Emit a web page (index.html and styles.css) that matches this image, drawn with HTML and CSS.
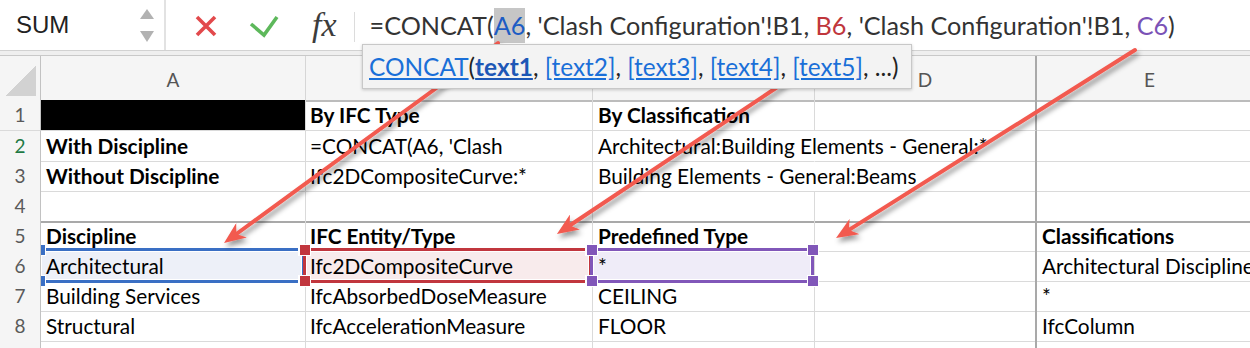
FILE: index.html
```html
<!DOCTYPE html>
<html>
  <head>
    <meta charset="UTF-8" />
    <title>Clash Configuration</title>
    <link rel="stylesheet" href="styles.css">
  </head>
  <body>
    <!-- Formula bar -->
    <div class="formula-bar">
      <div class="name-box">
        <span class="name">SUM</span>
        <svg class="spinner" width="14" height="34" viewBox="0 0 14 34">
          <polygon points="0,10 7,0 14,10" />
          <polygon points="0,22 7,33 14,22" />
        </svg>
      </div>
      <svg class="btn-cancel" width="24" height="24" viewBox="0 0 24 24">
        <path d="M3 2 L21 20 M21 2 L3 20" />
      </svg>
      <svg class="btn-enter" width="30" height="24" viewBox="0 0 30 24">
        <path d="M2 9 L15 20 L28 2" />
      </svg>
      <span class="fx">fx</span>
      <span class="divider"></span>
      <div class="formula">=CONCAT(<span class="ref ref-a">A6</span>, 'Clash Configuration'!B1, <span class="ref-b">B6</span>, 'Clash Configuration'!B1, <span class="ref-c">C6</span>)</div>
    </div>
    <div class="band"></div>

    <!-- Sheet grid -->
    <div class="sheet">
      <div class="row cols">
        <div class="corner"><span class="select-all"></span></div>
        <div class="ch">A</div>
        <div class="ch"></div>
        <div class="ch"></div>
        <div class="ch">D</div>
        <div class="ch">E</div>
      </div>
      <div class="row first">
        <div class="rh">1</div>
        <div class="cell black"></div>
        <div class="cell bold">By IFC Type</div>
        <div class="cell bold">By Classification</div>
        <div class="cell"></div>
        <div class="cell"></div>
      </div>
      <div class="row">
        <div class="rh active">2</div>
        <div class="cell bold">With Discipline</div>
        <div class="cell">=CONCAT(A6, 'Clash</div>
        <div class="cell spill">Architectural:Building Elements - General:*</div>
        <div class="cell"></div>
        <div class="cell"></div>
      </div>
      <div class="row">
        <div class="rh">3</div>
        <div class="cell bold">Without Discipline</div>
        <div class="cell">Ifc2DCompositeCurve:*</div>
        <div class="cell spill">Building Elements - General:Beams</div>
        <div class="cell"></div>
        <div class="cell"></div>
      </div>
      <div class="row freeze">
        <div class="rh">4</div>
        <div class="cell"></div>
        <div class="cell"></div>
        <div class="cell"></div>
        <div class="cell"></div>
        <div class="cell"></div>
      </div>
      <div class="row">
        <div class="rh">5</div>
        <div class="cell bold">Discipline</div>
        <div class="cell bold">IFC Entity/Type</div>
        <div class="cell bold">Predefined Type</div>
        <div class="cell"></div>
        <div class="cell bold">Classifications</div>
      </div>
      <div class="row">
        <div class="rh">6</div>
        <div class="cell sel sel-a">Architectural</div>
        <div class="cell sel sel-b">Ifc2DCompositeCurve</div>
        <div class="cell sel sel-c">*</div>
        <div class="cell"></div>
        <div class="cell">Architectural Discipline</div>
      </div>
      <div class="row">
        <div class="rh">7</div>
        <div class="cell">Building Services</div>
        <div class="cell">IfcAbsorbedDoseMeasure</div>
        <div class="cell">CEILING</div>
        <div class="cell"></div>
        <div class="cell">*</div>
      </div>
      <div class="row">
        <div class="rh">8</div>
        <div class="cell">Structural</div>
        <div class="cell">IfcAccelerationMeasure</div>
        <div class="cell">FLOOR</div>
        <div class="cell"></div>
        <div class="cell">IfcColumn</div>
      </div>
      <div class="row last">
        <div class="rh"></div>
        <div class="cell"></div>
        <div class="cell"></div>
        <div class="cell"></div>
        <div class="cell"></div>
        <div class="cell"></div>
      </div>
    </div>

    <!-- Annotation arrows -->
    <svg class="marks" width="1250" height="348" viewBox="0 0 1250 348">
      <defs>
        <filter id="shadow" x="-20%" y="-20%" width="140%" height="150%">
          <feDropShadow dx="2" dy="4" stdDeviation="2.5" flood-color="#000" flood-opacity="0.4" />
        </filter>
        <marker id="head" viewBox="0 0 12 10" refX="3.5" refY="5" markerWidth="21.6" markerHeight="18" markerUnits="userSpaceOnUse" orient="auto">
          <path d="M0 0 L12 5 L0 10 L3.5 5 Z" class="head" />
        </marker>
      </defs>
      <g class="arrows" filter="url(#shadow)">
        <line x1="498" y1="43" x2="236.4" y2="234" marker-end="url(#head)" />
        <line x1="785" y1="82" x2="569.7" y2="225.5" marker-end="url(#head)" />
        <line x1="1135" y1="50" x2="849" y2="229.9" marker-end="url(#head)" />
      </g>
    </svg>

    <!-- Function hint -->
    <div class="hint">
      <span class="arg">CONCAT</span>(<span class="arg cur">text1</span>, <span class="arg">[text2]</span>, <span class="arg">[text3]</span>, <span class="arg">[text4]</span>, <span class="arg">[text5]</span>, ...)
    </div>
  </body>
</html>
```

FILE: styles.css
```css
body {
  margin: 0;
  width: 1250px;
  height: 348px;
  overflow: hidden;
  position: relative;
  background-color: #fff;
  font-family: Lato, "Liberation Sans", sans-serif;
  color: #000;
}

/* Formula bar */
.formula-bar {
  display: flex;
  align-items: center;
  height: 50px;
  border-bottom: 1px solid #d2d2d2;
  background-color: #fff;
}

.name-box {
  align-self: stretch;
  box-sizing: border-box;
  width: 166px;
  display: flex;
  align-items: center;
  justify-content: space-between;
  padding: 0 10px 0 16px;
  border-right: 2px solid #e2e2e2;
}

.name {
  font-family: "Liberation Sans", sans-serif;
  font-size: 24px;
  color: #222;
}

.spinner {
  fill: #b2b2b2;
  margin-top: 2px;
}

.btn-cancel {
  margin: 4px 0 0 28px;
  fill: none;
  stroke: #e2494c;
  stroke-width: 3.6;
}

.btn-enter {
  margin: 4px 0 0 31px;
  fill: none;
  stroke: #5db85b;
  stroke-width: 3.6;
}

.fx {
  margin: 0 0 0 33px;
  font-family: "Liberation Serif", serif;
  font-style: italic;
  font-size: 34px;
  line-height: 36px;
  color: #3c3c3c;
}

.divider {
  width: 1px;
  height: 30px;
  margin: 4px 0 0 17px;
  background-color: #dcdcdc;
}

.formula {
  margin-left: 15px;
  font-size: 25.2px;
  line-height: 30px;
  color: #333;
  white-space: nowrap;
}

.ref-a {
  color: #1c5cc4;
  background-color: #c6c6c6;
  padding: 2px 0 3px;
}

.ref-b {
  color: #c0363c;
}

.ref-c {
  color: #7a52b6;
}

.band {
  height: 4px;
  background-color: #efefef;
  border-bottom: 1px solid #c9c9c9;
}

/* Grid */
.sheet {
  width: 1263px;
}

.row {
  display: grid;
  grid-template-columns: 41px 265px 287px 222px 222px 226px;
  height: 30px;
}

.row.first {
  height: 31px;
}

.row.cols {
  height: 44px;
}

.corner,
.ch {
  box-sizing: border-box;
  background-color: #f5f5f5;
  border-right: 1px solid #d6d6d6;
  border-bottom: 2px solid #bcbcbc;
}

.corner {
  position: relative;
  border-right-color: #c2c2c2;
}

.select-all {
  position: absolute;
  left: 6px;
  bottom: 4px;
  width: 30px;
  height: 30px;
  background: linear-gradient(to bottom right, transparent 50%, #d2d2d2 50%);
}

.ch {
  padding-top: 4px;
  text-align: center;
  font-size: 19px;
  line-height: 40px;
  color: #555;
}

.ch:nth-child(5) {
  border-right: 2px solid #a9a9a9;
}

.rh {
  position: relative;
  z-index: 1;
  box-sizing: border-box;
  background-color: #f5f5f5;
  border-right: 1px solid #c2c2c2;
  border-bottom: 1px solid #dadada;
  text-align: center;
  font-size: 19px;
  line-height: 30px;
  color: #5a5a5a;
}

.rh.active {
  color: #1f7a45;
}

.cell {
  box-sizing: border-box;
  border-right: 1px solid #dadada;
  border-bottom: 1px solid #dadada;
  padding: 0 5px;
  font-size: 20.8px;
  line-height: 29px;
  white-space: nowrap;
}

.cell:nth-child(3) {
  padding-left: 4px;
}

.cell:nth-child(5) {
  border-right: 2px solid #a9a9a9;
}

.cell:nth-child(6) {
  overflow: hidden;
}

.row.freeze .cell,
.row.freeze .rh {
  border-bottom: 2px solid #a9a9a9;
}

.bold {
  font-weight: bold;
}

.black {
  background-color: #000;
}

.spill {
  border-right-color: transparent;
}

/* Formula reference frames */
.sel {
  position: relative;
}

.sel::before {
  content: "";
  position: absolute;
  top: -3px;
  left: -3px;
  right: 0;
  bottom: -2px;
  border: 3px solid var(--ref);
  box-shadow: inset 0 0 0 1px #fff;
}

.sel::after {
  content: "";
  position: absolute;
  top: -7px;
  left: -7px;
  right: -5px;
  bottom: -6px;
  background:
    linear-gradient(var(--ref), var(--ref)) left 1px top 1px / 10px 10px no-repeat,
    linear-gradient(var(--ref), var(--ref)) right 1px top 1px / 10px 10px no-repeat,
    linear-gradient(var(--ref), var(--ref)) left 1px bottom 1px / 10px 10px no-repeat,
    linear-gradient(var(--ref), var(--ref)) right 1px bottom 1px / 10px 10px no-repeat,
    linear-gradient(#fff, #fff) left top / 12px 12px no-repeat,
    linear-gradient(#fff, #fff) right top / 12px 12px no-repeat,
    linear-gradient(#fff, #fff) left bottom / 12px 12px no-repeat,
    linear-gradient(#fff, #fff) right bottom / 12px 12px no-repeat;
}

.sel-a {
  --ref: #3a6fc4;
  background-color: #edf0f8;
}

.sel-b {
  --ref: #c1363e;
  background-color: #f8ebec;
}

.sel-c {
  --ref: #8157b9;
  background-color: #efecf8;
}

/* Annotations */
.marks {
  position: absolute;
  top: 0;
  left: 0;
  z-index: 5;
  pointer-events: none;
}

.arrows {
  stroke: #f25a50;
  stroke-width: 4;
  stroke-linecap: round;
}

.head {
  fill: #f25a50;
  stroke: none;
}

/* Function hint tooltip */
.hint {
  position: absolute;
  top: 44px;
  left: 362px;
  z-index: 6;
  box-sizing: border-box;
  width: 550px;
  height: 45px;
  padding-left: 6px;
  background-color: #f3f3f3;
  border: 1px solid #c8c8c8;
  box-shadow: 0 1px 3px rgba(0, 0, 0, 0.2);
  font-size: 24.4px;
  line-height: 43px;
  color: #222;
  white-space: nowrap;
}

.arg {
  color: #1a6fd8;
  text-decoration: underline;
}

.arg.cur {
  color: #1d57b6;
  font-weight: bold;
}
```
